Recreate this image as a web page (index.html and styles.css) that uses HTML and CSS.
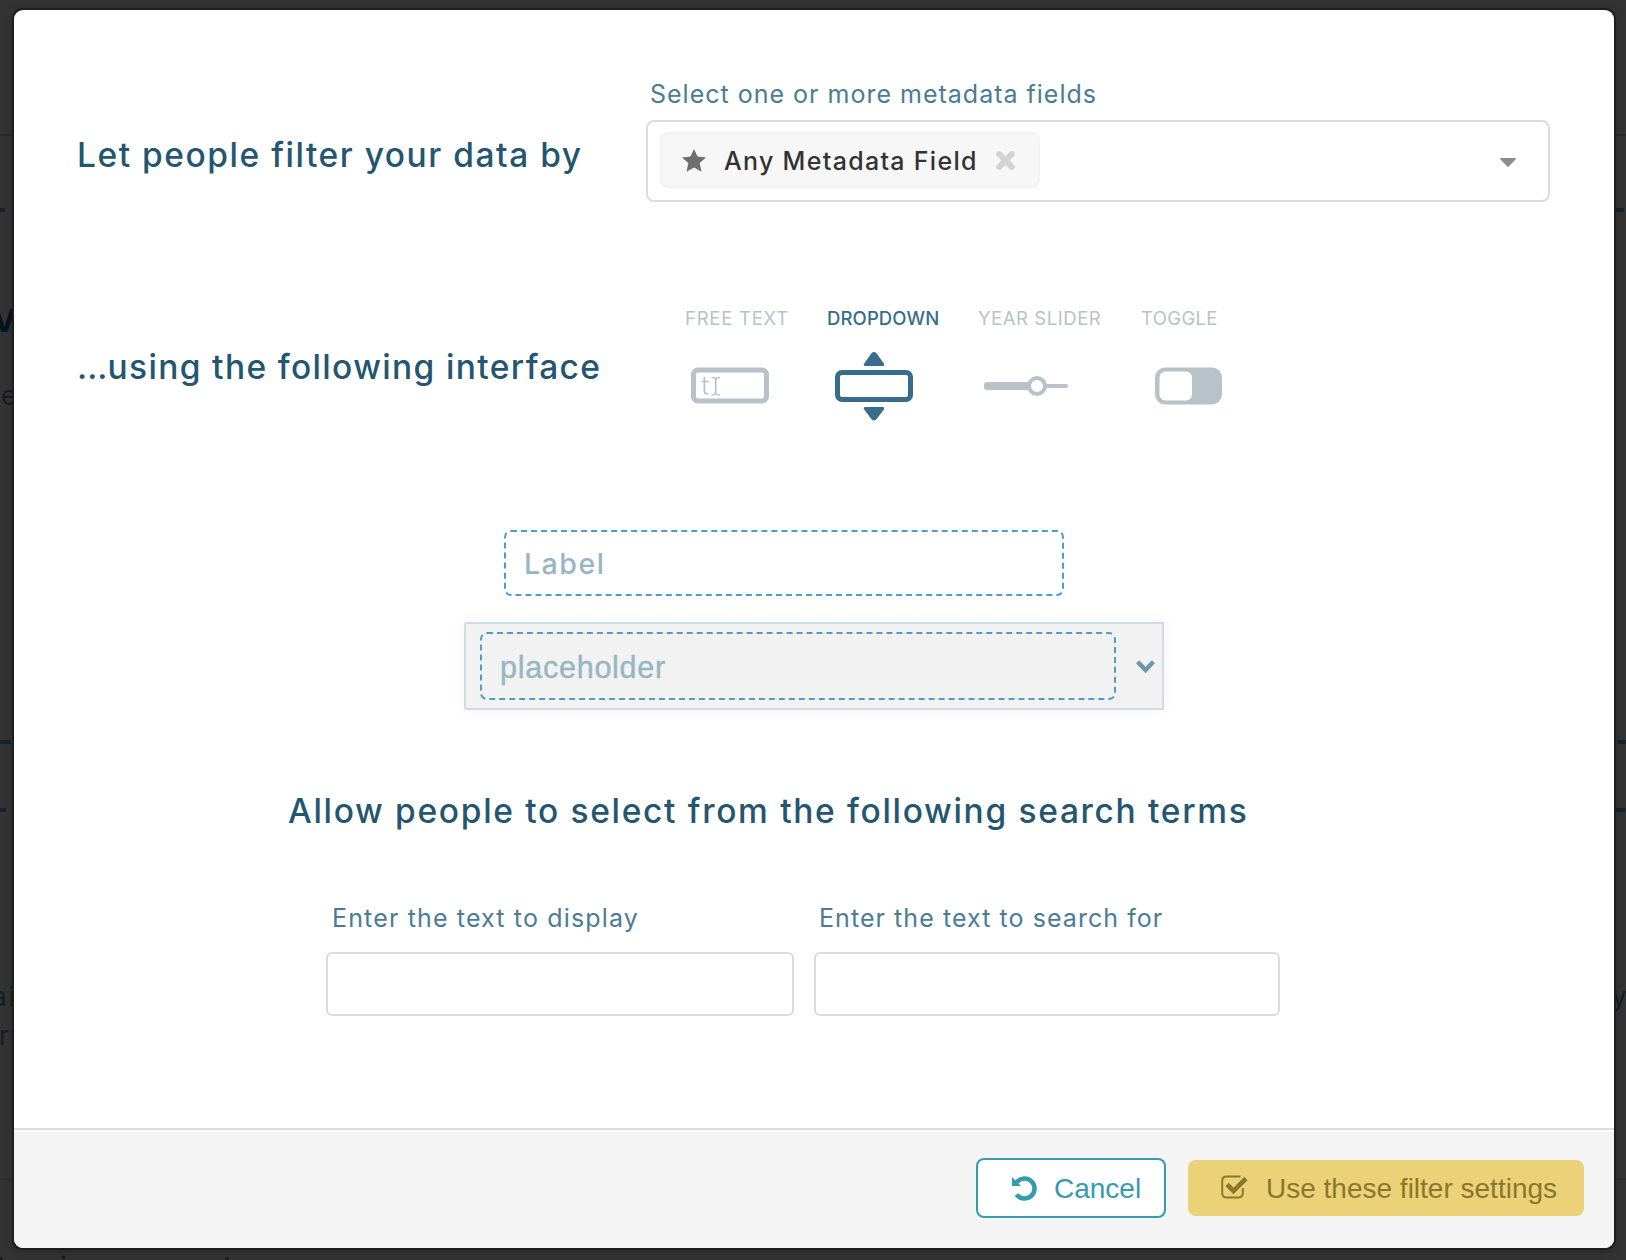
FILE: index.html
```html
<!DOCTYPE html>
<html lang="en">
<head>
<meta charset="utf-8">
<title>Filter settings</title>
<link rel="stylesheet" href="styles.css">
</head>
<body>
<div class="backdrop" aria-hidden="true">
  <i class="rule rule-top"></i>
  <i class="rule rule-bottom"></i>
  <i class="dash dash-a"></i><i class="dash dash-b"></i><i class="dash dash-c"></i>
  <i class="dash dash-d"></i><i class="dash dash-e"></i><i class="dash dash-f"></i>
  <span class="under under-v">v</span>
  <span class="under under-e">e</span>
  <span class="under under-ai">ai</span>
  <span class="under under-ru">ru</span>
  <span class="under under-y">y</span>
  <span class="under under-l1">l</span>
  <span class="under under-l2">i</span>
  <span class="under under-l3">d</span>
</div>
<main class="modal">
  <div class="body">
    <section class="row row-fields">
      <h2 class="heading h-data">Let people filter your data by</h2>
      <div class="field">
        <label class="label l-fields">Select one or more metadata fields</label>
        <div class="multiselect">
          <div class="chip">
            <svg class="star" viewBox="0 0 24 23"><path d="M12 0l3.500 7.600 8.500.9-6.300 5.600L19.500 22.700 12 18.500l-7.500 4.200 1.800-8.600L0 8.500l8.500-.9z"/></svg>
            <span class="chip-text">Any Metadata Field</span>
            <svg class="remove" viewBox="0 0 21 21"><path d="M4.200 4.200l12.600 12.600M16.800 4.200L4.200 16.800"/></svg>
          </div>
          <svg class="caret" viewBox="0 0 16 9"><path d="M1 0h14q1.500.3.500 1.500L8.700 8.500q-.7.600-1.400 0L.5 1.500Q-.5.300 1 0z"/></svg>
        </div>
      </div>
    </section>
    <section class="row row-interface">
      <h2 class="heading h-interface"><span class="dots">...</span>using the following interface</h2>
      <div class="tabs">
        <div class="tab"><span class="t-free">FREE TEXT</span>
          <svg class="icon icon-free" width="78" height="70" viewBox="0 0 78 70"><rect x="2.500" y="18" width="73" height="31" rx="4.500" fill="none" stroke="currentColor" stroke-width="5"/><path d="M13.400 25v14q0 3 4 3M10.500 29.500h7.500M20.500 25.500q4 0 4.200 2 .2-2 4.300-2M24.700 27v14.500M20.500 43q4 0 4.200-2 .2 2 4.300 2" fill="none" stroke="currentColor" stroke-width="1.700"/></svg></div>
        <div class="tab active"><span class="t-drop">DROPDOWN</span>
          <svg class="icon icon-drop" width="78" height="70" viewBox="0 0 78 70"><rect x="2.500" y="20.500" width="73" height="27" rx="4.500" fill="none" stroke="currentColor" stroke-width="5"/><path d="M36.500 1.200q2.500-2.400 5 0L49.200 12q.6 2-1.500 2H30.300q-2.100 0-1.500-2zM36.500 67.300q2.500 2.400 5 0L49.200 57q.6-2-1.500-2H30.300q-2.100 0-1.500 2z" fill="currentColor"/></svg></div>
        <div class="tab"><span class="t-year">YEAR SLIDER</span>
          <svg class="icon icon-slider" width="84" height="70" viewBox="0 0 84 70"><rect y="30" width="50" height="8" rx="3" fill="currentColor"/><rect x="54" y="32" width="30" height="4" rx="2" fill="currentColor"/><circle cx="53" cy="34" r="8" fill="#fff" stroke="currentColor" stroke-width="4"/></svg></div>
        <div class="tab"><span class="t-toggle">TOGGLE</span>
          <svg class="icon icon-toggle" width="67" height="70" viewBox="0 0 67 70"><rect y="15.500" width="67" height="37" rx="10" fill="currentColor"/><rect x="4.500" y="19.500" width="32.500" height="29" rx="6" fill="#fff"/></svg></div>
      </div>
    </section>
    <section class="preview">
      <div class="label-box">Label</div>
      <div class="select-box">
        <div class="placeholder-box">placeholder</div>
        <svg class="chevron" viewBox="0 0 19 13"><path d="M1.600 1.800l7.900 8.200 7.900-8.200"/></svg>
      </div>
    </section>
    <section class="terms">
      <h2 class="heading h-terms">Allow people to select from the following search terms</h2>
      <div class="term-row">
        <div class="term"><label class="label l-display">Enter the text to display</label><div class="input"></div></div>
        <div class="term term-search"><label class="label l-search">Enter the text to search for</label><div class="input"></div></div>
      </div>
    </section>
  </div>
  <footer class="footer">
    <div class="button cancel">
      <svg class="undo" viewBox="0 0 24 24"><path d="M4.800 6.200A10 10 0 1 1 4.500 18.500" fill="none" stroke="currentColor" stroke-width="4.600"/><path d="M0 1v9h9z" fill="currentColor"/></svg>
      <span>Cancel</span>
    </div>
    <div class="button submit">
      <svg class="check" viewBox="0 0 27 24"><path d="M19.500 1.500H5.500Q1.200 1.500 1.200 6v12q0 4.500 4.300 4.500h12q4.300 0 4.300-4.500v-5" fill="none" stroke="currentColor" stroke-width="1.900"/><path d="M6 9.500l6.500 6.500L25 3.500" fill="none" stroke="currentColor" stroke-width="4.600"/></svg>
      <span>Use these filter settings</span>
    </div>
  </footer>
</main>
</body>
</html>
```
FILE: styles.css
```css
* { box-sizing: border-box; }
body { margin: 0; width: 1626px; height: 1260px; overflow: hidden; background: #333; font-family: Inter, "Liberation Sans", sans-serif; }
h2, label { margin: 0; display: block; font-weight: 400; white-space: nowrap; }
span { white-space: nowrap; }
svg { display: block; flex: none; overflow: visible; }

.backdrop { position: absolute; inset: 0; overflow: hidden; color: #111f25; }
.rule { position: absolute; left: 0; right: 0; height: 2px; background: #2b2b2b; }
.rule-top { top: 134px; }
.rule-bottom { top: 1178px; background: #2f2f2f; }
.dash { position: absolute; height: 4px; background: #14232d; }
.dash-a { left: 0; top: 208px; width: 5px; }
.dash-b { left: 0; top: 740px; width: 11px; }
.dash-c { left: 0; top: 808px; width: 6px; }
.dash-d { left: 1600px; top: 208px; width: 24px; }
.dash-e { left: 1618px; top: 740px; width: 8px; }
.dash-f { left: 1600px; top: 808px; width: 25px; }
.under { position: absolute; font-size: 26px; line-height: 32px; }
.under-v { left: -8px; top: 297px; font-size: 42px; line-height: 40px; font-weight: 600; color: #07151b; }
.under-e { left: 1px; top: 380px; }
.under-ai { left: -8px; top: 981px; letter-spacing: 2px; }
.under-ru { left: -1px; top: 1020px; letter-spacing: 1px; }
.under-y { left: 1612px; top: 981px; }
.under-l1 { left: -3px; top: 1251px; font-weight: 600; }
.under-l2 { left: 60px; top: 1251px; font-weight: 600; }
.under-l3 { left: 214px; top: 1251px; font-weight: 600; }

.modal { position: relative; display: flex; flex-direction: column; width: 1600px; height: 1238px; margin: 10px 0 0 14px; background: #fff; border-radius: 9px; overflow: hidden; box-shadow: 0 0 0 2px #1e1e1e, 0 2px 8px rgba(0, 0, 0, .35); }
.body { flex: 1; }
.heading { font-size: 33.5px; line-height: 40px; font-weight: 500; color: #24566f; }
.h-data { letter-spacing: 1.53px; }
.h-interface { letter-spacing: 1.36px; }
.h-terms { letter-spacing: 1.68px; }
.dots { letter-spacing: 0; }
.label { font-size: 25px; line-height: 30px; color: #4b7c94; }
.l-fields { letter-spacing: 1px; }
.l-display { letter-spacing: 1.15px; }
.l-search { letter-spacing: 1.06px; }

.row { display: flex; padding-left: 63px; }
.row .heading { width: 569px; }
.row-fields { padding-top: 69px; height: 295px; }
.row-fields .heading { padding-top: 56px; }
.field { width: 904px; }
.field .label { padding-left: 4px; }
.multiselect { display: flex; align-items: center; justify-content: space-between; height: 82px; margin-top: 11px; padding: 0 32px 2px 12px; border: 2px solid #ddd; border-radius: 8px; }
.chip { display: flex; align-items: center; width: 380px; height: 56px; padding-left: 20px; background: #f7f7f7; border: 2px solid #f2f2f2; border-radius: 8px; font-size: 25px; font-weight: 500; color: #333; }
.star { width: 24px; height: 23px; fill: #6f6f6f; }
.chip-text { flex: none; width: 289px; padding: 1px 0 0 18px; letter-spacing: 1.3px; }
.remove { width: 21px; height: 21px; fill: none; stroke: #d3d3d3; stroke-width: 6; stroke-linecap: round; }
.caret { width: 16px; height: 9px; margin-top: 5px; fill: #8c8c8c; }

.row-interface { height: 225px; }
.row-interface .heading { padding-top: 42px; width: 607px; }
.tabs { display: flex; padding-top: 1px; color: #b7c3c9; font-size: 18.5px; line-height: 24px; }
.tab { width: 143px; }
.tab:nth-child(2) { width: 151px; }
.tab:nth-child(3) { width: 163px; }
.tab span { display: block; }
.tab.active { color: #366d8c; font-weight: 500; }
.t-free { letter-spacing: .75px; padding-left: 1px; }
.t-drop { letter-spacing: .12px; }
.t-year { letter-spacing: .55px; }
.t-toggle { letter-spacing: .35px; }
.icon { margin-top: 22px; }
.icon-free { margin-left: 7px; }
.icon-drop { margin-left: 8px; }
.icon-slider { margin-left: 6px; }
.icon-toggle { margin-left: 14px; }

.preview { padding: 0 450px; height: 250px; color: #97b6c5; }
.label-box { display: flex; align-items: center; width: 560px; height: 66px; margin-left: 40px; padding: 1px 0 0 18px; border: 2px dashed #4c9dca; border-radius: 7px; font-size: 28.5px; font-weight: 500; letter-spacing: 1.5px; }
.select-box { display: flex; align-items: center; gap: 20px; width: 700px; height: 88px; margin-top: 26px; padding-left: 14px; background: #f2f2f2; border: 2px solid #cddde7; border-radius: 3px 0 0 3px; box-shadow: 0 0 16px rgba(0, 0, 0, .05); }
.placeholder-box { display: flex; align-items: center; width: 636px; height: 68px; padding: 3px 0 0 18px; border: 2px dashed #4c9dca; border-radius: 7px; font-family: "Liberation Sans", sans-serif; font-size: 30.5px; letter-spacing: .75px; -webkit-text-stroke: .4px #97b6c5; }
.chevron { width: 19px; height: 13px; fill: none; stroke: #6d97af; stroke-width: 4.4; }

.terms { padding: 11px 0 0 274px; }
.term-row { display: flex; gap: 20px; padding: 72px 0 0 38px; }
.term { width: 468px; }
.term-search { width: 466px; }
.term .label { padding-left: 6px; }
.term-search .label { padding-left: 5px; }
.input { height: 64px; margin-top: 19px; border: 2px solid #dcdcdc; border-radius: 6px; }

.footer { display: flex; justify-content: flex-end; align-items: flex-start; gap: 22px; height: 120px; padding: 26px 30px 0 0; background: #f4f4f4; border-top: 2px solid #dcdcdc; box-shadow: inset 0 2px #fff; }
.button { display: flex; align-items: center; font-family: "Liberation Sans", sans-serif; font-size: 28px; border-radius: 8px; }
.button span { padding-top: 1px; }
.cancel { width: 190px; height: 60px; margin-top: 2px; padding-left: 34px; gap: 18px; background: #fff; border: 2px solid #359bae; color: #359bae; }
.submit { width: 396px; height: 56px; margin-top: 4px; padding-left: 33px; gap: 18px; background: #ebd178; color: #8b762b; }
.undo { width: 24px; height: 24px; }
.check { width: 27px; height: 24px; margin-bottom: 3px; }
```
